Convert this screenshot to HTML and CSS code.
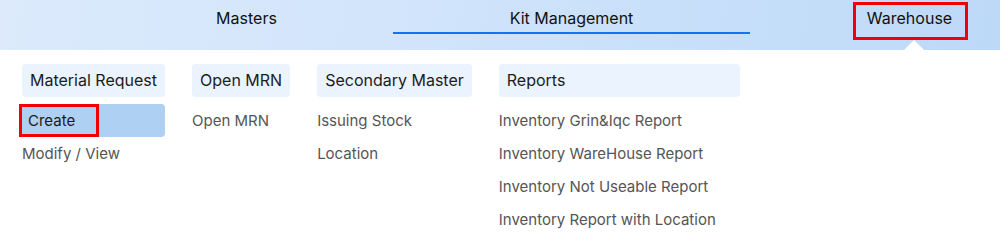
FILE: index.html
```html
<!DOCTYPE html>
<html lang="en">
<head>
    <meta charset="UTF-8">
    <meta name="viewport" content="width=device-width, initial-scale=1.0">
    <title>Warehouse Menu</title>
    <link rel="stylesheet" href="styles.css">
</head>
<body>
    <header class="top-nav">
        <a href="#" class="nav-tab tab-masters">Masters</a>
        <a href="#" class="nav-tab tab-kit active">Kit Management</a>
        <a href="#" class="nav-tab tab-warehouse open">Warehouse</a>
    </header>

    <div class="mega-menu">
        <div class="menu-col">
            <div class="menu-title">Material Request</div>
            <ul class="menu-list">
                <li class="selected"><span class="marked">Create</span></li>
                <li>Modify / View</li>
            </ul>
        </div>
        <div class="menu-col">
            <div class="menu-title">Open MRN</div>
            <ul class="menu-list">
                <li>Open MRN</li>
            </ul>
        </div>
        <div class="menu-col">
            <div class="menu-title">Secondary Master</div>
            <ul class="menu-list">
                <li>Issuing Stock</li>
                <li>Location</li>
            </ul>
        </div>
        <div class="menu-col col-reports">
            <div class="menu-title">Reports</div>
            <ul class="menu-list">
                <li>Inventory Grin&amp;Iqc Report</li>
                <li>Inventory WareHouse Report</li>
                <li>Inventory Not Useable Report</li>
                <li>Inventory Report with Location</li>
                <li>Inventory Report</li>
            </ul>
        </div>
    </div>
</body>
</html>
```

FILE: styles.css
```css
* {
    margin: 0;
    padding: 0;
    box-sizing: border-box;
    font-family: Inter, "Noto Sans", sans-serif;
}

body {
    background: #fff;
    overflow: hidden;
}

.top-nav {
    display: flex;
    align-items: flex-start;
    height: 50px;
    background: linear-gradient(100deg, #dceafc 0%, #d0e4fb 45%, #bdd9f8 100%);
}

.nav-tab {
    position: relative;
    display: block;
    color: #111;
    text-decoration: none;
    font-size: 16px;
    text-align: center;
}

.tab-masters {
    margin-left: 100px;
    width: 293px;
    padding-top: 8px;
    height: 34px;
}

.tab-kit {
    width: 357px;
    padding-top: 8px;
    height: 34px;
}

.tab-kit.active {
    border-bottom: 2px solid #0d75f0;
}

.tab-warehouse {
    margin-left: 103px;
    margin-top: 2px;
    width: 115px;
    height: 38px;
    padding-top: 3px;
    padding-right: 2px;
    border: 3px solid #f20000;
}

.tab-warehouse.open::after {
    content: "";
    position: absolute;
    left: 47px;
    top: 35px;
    border-left: 11px solid transparent;
    border-right: 11px solid transparent;
    border-bottom: 11px solid #fff;
}

.mega-menu {
    display: flex;
    gap: 27px;
    padding: 14px 0 0 22px;
}

.menu-col {
    display: flex;
    flex-direction: column;
    gap: 7px;
}

.col-reports {
    width: 241px;
}

.menu-title {
    background: #eaf3fe;
    border-radius: 4px;
    height: 33px;
    line-height: 33px;
    padding: 0 8px;
    font-size: 16px;
    color: #1c1c1c;
    white-space: nowrap;
}

.menu-list {
    list-style: none;
}

.menu-list li {
    height: 33px;
    line-height: 33px;
    font-size: 15px;
    color: #555;
    white-space: nowrap;
}

.menu-list li.selected {
    background: #aed0f2;
    border-radius: 4px;
    color: #1a1a1a;
}

.marked {
    display: inline-block;
    height: 33px;
    width: 80px;
    margin-left: -3px;
    padding-left: 6px;
    border: 3px solid #f20000;
    line-height: 27px;
}
```
